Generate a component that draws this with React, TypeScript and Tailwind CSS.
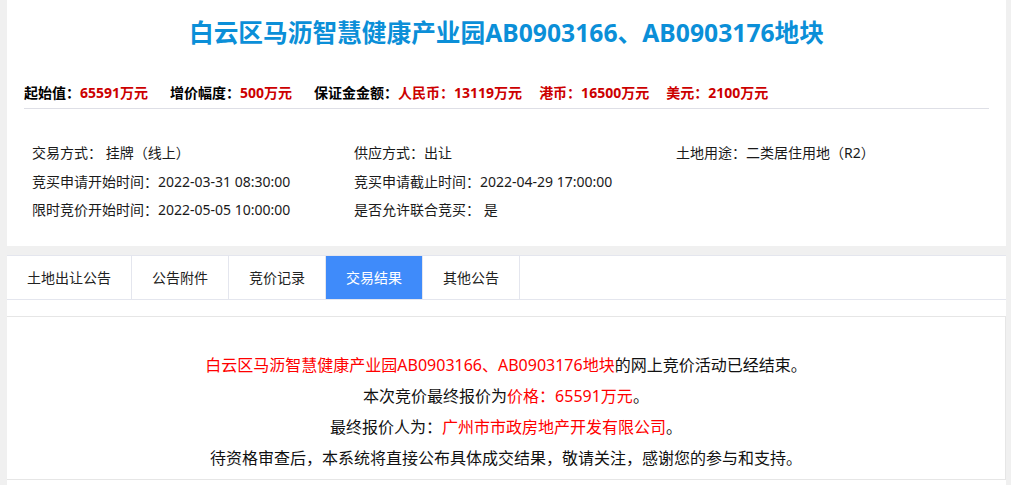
import React from "react";

const FONT = '"Noto Sans", "Noto Sans CJK SC", sans-serif';

export default function App() {
  const tabs = ["土地出让公告", "公告附件", "竞价记录", "交易结果", "其他公告"];
  return (
    <div className="min-h-screen bg-[#f0f0f0] pl-[7px] pr-[5px]" style={{ fontFamily: FONT }}>
      <div className="bg-white pb-[21px]">
        <h1 className="pt-[16px] text-center text-[24.7px] font-bold leading-[34px] text-[#0b8fd8]">
          白云区马沥智慧健康产业园AB0903166、AB0903176地块
        </h1>
        <div className="mx-[17px] mt-[33px] flex gap-[22px] border-b border-[#dedfe6] pb-[5px] text-[14px] font-bold leading-[20px] text-black">
          <span>
            起始值：<span className="text-[#cc0000]">65591万元</span>
          </span>
          <span>
            增价幅度：<span className="text-[#cc0000]">500万元</span>
          </span>
          <span className="flex gap-[17px]">
            <span>
              保证金金额：<span className="text-[#cc0000]">人民币：13119万元</span>
            </span>
            <span className="text-[#cc0000]">港币：16500万元</span>
            <span className="text-[#cc0000]">美元：2100万元</span>
          </span>
        </div>
        <div className="mt-[30px] grid grid-cols-[322px_322px_1fr] pl-[25px] text-[14px] leading-[28.5px] text-[#1a1a1a]">
          <div>交易方式： 挂牌（线上）</div>
          <div>供应方式：出让</div>
          <div>土地用途：二类居住用地（R2）</div>
          <div>竞买申请开始时间：2022-03-31 08:30:00</div>
          <div>竞买申请截止时间：2022-04-29 17:00:00</div>
          <div></div>
          <div>限时竞价开始时间：2022-05-05 10:00:00</div>
          <div>是否允许联合竞买： 是</div>
          <div></div>
        </div>
      </div>
      <div className="mt-[9px] bg-white pb-[6px]">
        <div className="flex h-[45px] border-t border-b border-[#e4e6ee]">
          {tabs.map((t, i) => (
            <div
              key={t}
              className={
                i === 3
                  ? "flex items-center border-r border-[#e4e6ee] bg-[#3f8bfa] px-[20px] text-[14px] text-white"
                  : "flex items-center border-r border-[#e4e6ee] px-[20px] text-[14px] text-[#222]"
              }
            >
              {t}
            </div>
          ))}
        </div>
        <div className="mt-[16px] border-t border-b border-r border-[#e6e6e6] pt-[33px] pb-[5px] text-center text-[16px] leading-[31px] text-[#111]">
          <p>
            <span className="text-[#ff0000]">白云区马沥智慧健康产业园AB0903166、AB0903176地块</span>的网上竞价活动已经结束。
          </p>
          <p>
            本次竞价最终报价为<span className="text-[#ff0000]">价格：65591万元</span>。
          </p>
          <p>
            最终报价人为：<span className="text-[#ff0000]">广州市市政房地产开发有限公司</span>。
          </p>
          <p>待资格审查后，本系统将直接公布具体成交结果，敬请关注，感谢您的参与和支持。</p>
        </div>
      </div>
    </div>
  );
}
